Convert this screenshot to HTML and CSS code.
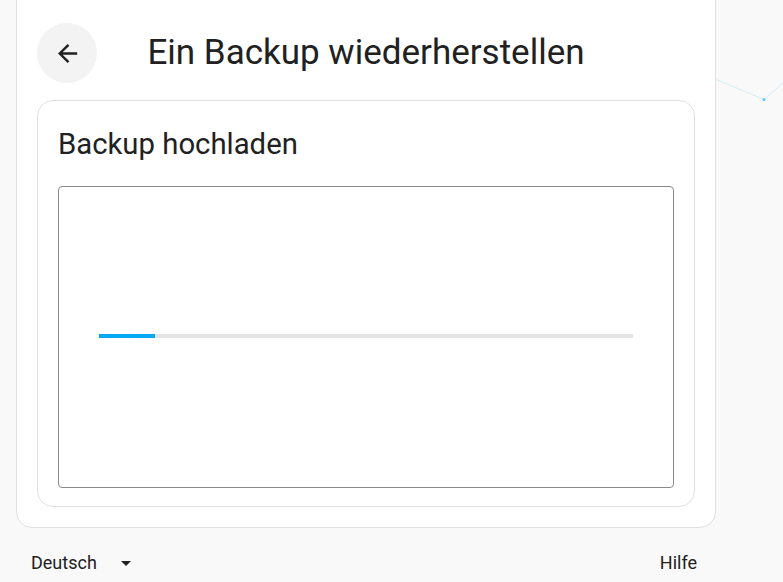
FILE: index.html
```html
<!DOCTYPE html>
<html lang="de">
<head>
    <meta charset="UTF-8">
    <meta name="viewport" content="width=device-width, initial-scale=1.0">
    <title>Ein Backup wiederherstellen</title>
    <link rel="stylesheet" href="styles.css">
</head>
<body>

    <!-- Hintergrund-Deko rechts oben -->
    <svg class="deco" width="70" height="60" viewBox="0 0 70 60">
        <polyline points="0,19 49,39.5 70,21" fill="none" stroke="#d3ecf8" stroke-width="1"/>
        <circle cx="49" cy="39.5" r="1.6" fill="#6cc6f2"/>
    </svg>

    <div class="page">
        <div class="card">
            <div class="card-header">
                <button class="back-btn" aria-label="Zurück">
                    <svg width="29" height="29" viewBox="0 0 24 24">
                        <path d="M20,11V13H8L13.5,18.5L12.08,19.92L4.16,12L12.08,4.08L13.5,5.5L8,11H20Z" fill="#212121"/>
                    </svg>
                </button>
                <h1>Ein Backup wiederherstellen</h1>
                <span></span>
            </div>

            <div class="upload-card">
                <h2>Backup hochladen</h2>
                <div class="dropzone">
                    <div class="progress">
                        <div class="progress-bar" style="width: 10.5%"></div>
                    </div>
                </div>
            </div>
        </div>

        <div class="footer">
            <div class="lang">
                <span>Deutsch</span>
                <span class="caret"></span>
            </div>
            <a class="help" href="#">Hilfe</a>
        </div>
    </div>

</body>
</html>
```

FILE: styles.css
```css
body {
    font-family: Roboto, "Noto Sans", sans-serif;
    background-color: #f9f9f9;
    color: #212121;
    margin: 0;
    overflow: hidden;
    position: relative;
    min-height: 100vh;
}
.deco {
    position: absolute;
    top: 60px;
    left: 715px;
}
.page {
    width: 700px;
    margin-left: 16px;
}
.card {
    background-color: #ffffff;
    border: 1px solid #e0e0e0;
    border-radius: 16px;
    margin-top: -40px;
    padding: 62px 20px 20px;
}
.card-header {
    display: grid;
    grid-template-columns: 60px 1fr 60px;
    align-items: center;
    margin-bottom: 17px;
}
.back-btn {
    width: 60px;
    height: 60px;
    border-radius: 50%;
    border: none;
    background-color: #f3f3f3;
    padding: 0;
    display: flex;
    align-items: center;
    justify-content: center;
    cursor: pointer;
}
h1 {
    margin: 0;
    text-align: center;
    font-size: 35px;
    font-weight: 400;
    line-height: 60px;
    color: #212121;
}
.upload-card {
    border: 1px solid #e0e0e0;
    border-radius: 16px;
    padding: 20px 20px 18px;
}
h2 {
    margin: 0 0 19px;
    font-size: 29.3px;
    font-weight: 400;
    line-height: 46px;
    color: #212121;
}
.dropzone {
    height: 300px;
    border: 1px solid #8a8a8a;
    border-radius: 4px;
    display: flex;
    align-items: center;
    padding: 0 40px;
}
.progress {
    flex: 1;
    height: 4px;
    margin-bottom: 3px;
    background-color: #e4e4e4;
}
.progress-bar {
    height: 100%;
    background-color: #03a9f4;
}
.footer {
    display: flex;
    justify-content: space-between;
    align-items: center;
    padding: 24px 19px 0 15px;
    font-size: 18px;
}
.lang {
    display: flex;
    align-items: center;
    gap: 24px;
}
.caret {
    width: 0;
    height: 0;
    margin-top: 2px;
    border-left: 5px solid transparent;
    border-right: 5px solid transparent;
    border-top: 5px solid #212121;
}
.help {
    color: #212121;
    text-decoration: none;
}
```
